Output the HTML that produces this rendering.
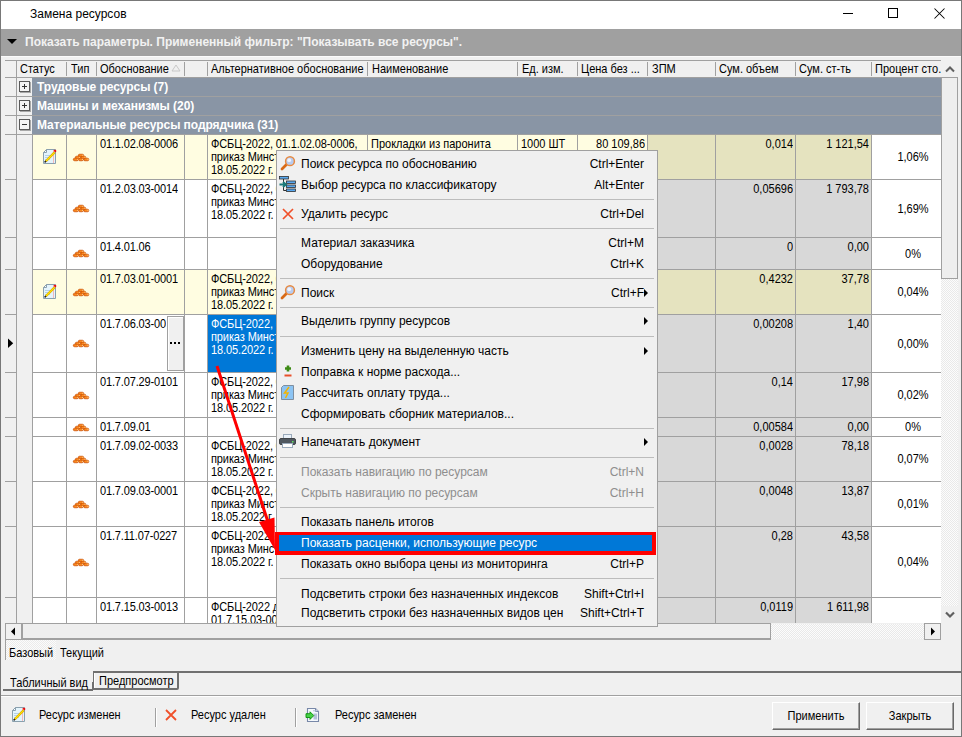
<!DOCTYPE html>
<html><head><meta charset="utf-8"><style>
html,body{margin:0;padding:0;width:962px;height:737px;overflow:hidden;background:#f0f0f0}
body{position:relative;font-family:"Liberation Sans",sans-serif;}
div,svg{position:absolute;}
div{white-space:pre;box-sizing:content-box}
svg{overflow:visible}
</style></head><body>
<div style="left:0px;top:0px;width:962px;height:737px;background:#f0f0f0"></div>
<div style="left:1px;top:1px;width:960px;height:28px;background:#fff"></div>
<div style="top:8px;font-size:12px;line-height:12px;color:#000;left:30px;">Замена ресурсов</div>
<div style="left:843px;top:13px;width:10px;height:1px;background:#000"></div>
<div style="left:888px;top:8px;width:8px;height:8px;border:1px solid #000"></div>
<svg style="left:934px;top:8px" width="11" height="11"><path d="M0.5 0.5L10.5 10.5M10.5 0.5L0.5 10.5" stroke="#000" stroke-width="1.05"/></svg>
<div style="left:1px;top:29px;width:960px;height:27px;background:#a0a0a0"></div>
<svg style="left:6px;top:38px" width="12" height="8"><path d="M1 1H11L6 6Z" fill="#000"/></svg>
<div style="top:36px;font-size:12px;line-height:12px;color:#f2f2f2;font-weight:bold;left:25px;">Показать параметры. Примененный фильтр: &quot;Показывать все ресурсы&quot;.</div>
<div style="left:1px;top:56px;width:960px;height:1px;background:#fafafa"></div>
<div style="left:0px;top:0px;width:962px;height:1px;background:#787878"></div>
<div style="left:0px;top:736px;width:962px;height:1px;background:#787878"></div>
<div style="left:0px;top:0px;width:1px;height:737px;background:#787878"></div>
<div style="left:961px;top:0px;width:1px;height:737px;background:#787878"></div>
<div style="left:5px;top:60px;width:936px;height:18px;background:#f0f0f0"></div>
<div style="left:5px;top:60px;width:936px;height:1px;background:#a0a0a0"></div>
<div style="left:5px;top:77px;width:936px;height:1px;background:#a0a0a0"></div>
<div style="left:16px;top:61px;width:1px;height:17px;background:#a0a0a0"></div>
<div style="left:66px;top:62px;width:1px;height:14px;background:#a0a0a0"></div>
<div style="left:96px;top:62px;width:1px;height:14px;background:#a0a0a0"></div>
<div style="left:184px;top:62px;width:1px;height:14px;background:#a0a0a0"></div>
<div style="left:207px;top:62px;width:1px;height:14px;background:#a0a0a0"></div>
<div style="left:367px;top:62px;width:1px;height:14px;background:#a0a0a0"></div>
<div style="left:517px;top:62px;width:1px;height:14px;background:#a0a0a0"></div>
<div style="left:577px;top:62px;width:1px;height:14px;background:#a0a0a0"></div>
<div style="left:647px;top:62px;width:1px;height:14px;background:#a0a0a0"></div>
<div style="left:715px;top:62px;width:1px;height:14px;background:#a0a0a0"></div>
<div style="left:795px;top:62px;width:1px;height:14px;background:#a0a0a0"></div>
<div style="left:871px;top:62px;width:1px;height:14px;background:#a0a0a0"></div>
<div style="top:64px;font-size:11px;line-height:11px;color:#000;transform:scaleY(1.125);transform-origin:0 9px;left:20px;">Статус</div>
<div style="top:64px;font-size:11px;line-height:11px;color:#000;transform:scaleY(1.125);transform-origin:0 9px;left:71px;">Тип</div>
<div style="top:64px;font-size:11px;line-height:11px;color:#000;transform:scaleY(1.125);transform-origin:0 9px;left:100px;">Обоснование</div>
<div style="top:64px;font-size:11px;line-height:11px;color:#000;transform:scaleY(1.125);transform-origin:0 9px;left:211px;">Альтернативное обоснование</div>
<div style="top:64px;font-size:11px;line-height:11px;color:#000;transform:scaleY(1.125);transform-origin:0 9px;left:372px;">Наименование</div>
<div style="top:64px;font-size:11px;line-height:11px;color:#000;transform:scaleY(1.125);transform-origin:0 9px;left:522px;">Ед. изм.</div>
<div style="top:64px;font-size:11px;line-height:11px;color:#000;transform:scaleY(1.125);transform-origin:0 9px;left:581px;">Цена без ...</div>
<div style="top:64px;font-size:11px;line-height:11px;color:#000;transform:scaleY(1.125);transform-origin:0 9px;left:652px;">ЗПМ</div>
<div style="top:64px;font-size:11px;line-height:11px;color:#000;transform:scaleY(1.125);transform-origin:0 9px;left:719px;">Сум. объем</div>
<div style="top:64px;font-size:11px;line-height:11px;color:#000;transform:scaleY(1.125);transform-origin:0 9px;left:799px;">Сум. ст-ть</div>
<div style="top:64px;font-size:11px;line-height:11px;color:#000;transform:scaleY(1.125);transform-origin:0 9px;left:875px;">Процент сто.</div>
<svg style="left:171px;top:64px" width="10" height="8"><path d="M1 7L5 1L9 7Z" fill="none" stroke="#c8c8c8" stroke-width="1"/></svg>
<div style="left:5px;top:78px;width:11px;height:545px;background:#f0f0f0"></div>
<div style="left:17px;top:78px;width:15px;height:545px;background:#f0f0f0"></div>
<div style="left:16px;top:78px;width:1px;height:545px;background:#a0a0a0"></div>
<div style="left:32px;top:135px;width:1px;height:488px;background:#a0a0a0"></div>
<div style="left:33px;top:78px;width:908px;height:18px;background:#8995a5"></div>
<div style="left:32px;top:78px;width:1px;height:18px;background:#8995a5"></div>
<div style="left:5px;top:96px;width:936px;height:1px;background:#a0a0a0"></div>
<div style="left:19px;top:81px;width:9px;height:9px;background:#f4f4f4;border:1px solid #5a5a5a;box-shadow:1px 1px 0 #a8a8a8"></div>
<div style="left:22px;top:86px;width:5px;height:1px;background:#333"></div>
<div style="left:24px;top:84px;width:1px;height:5px;background:#333"></div>
<div style="top:81px;font-size:12px;line-height:12px;color:#fff;font-weight:bold;left:37px;letter-spacing:-0.06px;">Трудовые ресурсы (7)</div>
<div style="left:33px;top:97px;width:908px;height:18px;background:#8995a5"></div>
<div style="left:32px;top:97px;width:1px;height:18px;background:#8995a5"></div>
<div style="left:5px;top:115px;width:936px;height:1px;background:#a0a0a0"></div>
<div style="left:19px;top:100px;width:9px;height:9px;background:#f4f4f4;border:1px solid #5a5a5a;box-shadow:1px 1px 0 #a8a8a8"></div>
<div style="left:22px;top:105px;width:5px;height:1px;background:#333"></div>
<div style="left:24px;top:103px;width:1px;height:5px;background:#333"></div>
<div style="top:100px;font-size:12px;line-height:12px;color:#fff;font-weight:bold;left:37px;letter-spacing:-0.06px;">Машины и механизмы (20)</div>
<div style="left:33px;top:116px;width:908px;height:18px;background:#8995a5"></div>
<div style="left:32px;top:116px;width:1px;height:18px;background:#8995a5"></div>
<div style="left:5px;top:134px;width:936px;height:1px;background:#a0a0a0"></div>
<div style="left:19px;top:119px;width:9px;height:9px;background:#f4f4f4;border:1px solid #5a5a5a;box-shadow:1px 1px 0 #a8a8a8"></div>
<div style="left:22px;top:124px;width:5px;height:1px;background:#333"></div>
<div style="top:119px;font-size:12px;line-height:12px;color:#fff;font-weight:bold;left:37px;letter-spacing:-0.06px;">Материальные ресурсы подрядчика (31)</div>
<div style="left:0;top:0;width:962px;height:623px;overflow:hidden">
<div style="left:33px;top:135px;width:908px;height:44px;background:#fffde1"></div>
<div style="left:648px;top:135px;width:223px;height:44px;background:#e5e3bf"></div>
<div style="left:648px;top:135px;width:223px;height:44px;background:#e5e3bf"></div>
<div style="left:872px;top:135px;width:69px;height:44px;background:#fff"></div>
<div style="left:5px;top:179px;width:11px;height:1px;background:#a0a0a0"></div>
<div style="left:33px;top:179px;width:908px;height:1px;background:#a0a0a0"></div>
<div style="left:66px;top:135px;width:1px;height:44px;background:#a0a0a0"></div>
<div style="left:96px;top:135px;width:1px;height:44px;background:#a0a0a0"></div>
<div style="left:184px;top:135px;width:1px;height:44px;background:#a0a0a0"></div>
<div style="left:207px;top:135px;width:1px;height:44px;background:#a0a0a0"></div>
<div style="left:367px;top:135px;width:1px;height:44px;background:#a0a0a0"></div>
<div style="left:517px;top:135px;width:1px;height:44px;background:#a0a0a0"></div>
<div style="left:577px;top:135px;width:1px;height:44px;background:#a0a0a0"></div>
<div style="left:647px;top:135px;width:1px;height:44px;background:#a0a0a0"></div>
<div style="left:715px;top:135px;width:1px;height:44px;background:#a0a0a0"></div>
<div style="left:795px;top:135px;width:1px;height:44px;background:#a0a0a0"></div>
<div style="left:871px;top:135px;width:1px;height:44px;background:#a0a0a0"></div>
<svg style="left:42px;top:148px" width="16" height="16" viewBox="0 0 16 16"><path d="M1.5 4.5L4.5 1.5H13.5V15.5H1.5Z" fill="#e4f4fc" stroke="#8aa0ae"/><path d="M1.5 4.5H4.5V1.5Z" fill="#fff" stroke="#8aa0ae"/><path d="M3 7.5H10M3 9.5H9M3 11.5H8" stroke="#b4d2e8"/><path d="M11.5 2V15" stroke="#f4b8b8"/><path d="M3.8 13.2L12.6 4.4" stroke="#d8a000" stroke-width="2.3"/><path d="M4 13L12.6 4.4" stroke="#ffe400" stroke-width="1.2"/><path d="M12.4 3.6L13.8 2.2" stroke="#f00000" stroke-width="2.2"/><path d="M2.6 14.4L4 13" stroke="#222" stroke-width="1.5"/></svg>
<svg style="left:72px;top:153px" width="18" height="9" viewBox="0 0 18 9"><g fill="#f47208" stroke="#c04800" stroke-width="0.6"><rect x="6.3" y="1.2" width="5.4" height="2.6" rx="1.3"/><rect x="3.3" y="3.2" width="5.2" height="2.6" rx="1.3"/><rect x="8.6" y="3.2" width="5.2" height="2.6" rx="1.3"/><rect x="1.3" y="5.2" width="5" height="2.6" rx="1.3"/><rect x="6.6" y="5.2" width="4.6" height="2.6" rx="1.3"/><rect x="11.6" y="5.2" width="5.2" height="2.6" rx="1.3"/></g><g stroke="#ff9a30" stroke-width="0.8"><path d="M7.5 2.3H10.5M4.5 4.3H7.5M9.8 4.3H12.8M2.5 6.3H5.5M7.5 6.3H10.3M12.8 6.3H15.8"/></g><g fill="#ffd9a0"><rect x="10.3" y="1.8" width="1" height="1"/><rect x="7.2" y="3.8" width="1" height="1"/><rect x="12.5" y="3.8" width="1" height="1"/><rect x="5.2" y="5.8" width="1" height="1"/><rect x="10" y="5.8" width="1" height="1"/><rect x="15.5" y="5.8" width="1" height="1"/></g></svg>
<div style="top:139px;font-size:11px;line-height:11px;color:#000;transform:scaleY(1.125);transform-origin:0 9px;left:100px;width:83px;overflow:hidden;letter-spacing:-0.15px;">01.1.02.08-0006</div>
<div style="top:139px;font-size:11px;line-height:11px;color:#000;transform:scaleY(1.125);transform-origin:0 9px;left:211px;width:155px;overflow:hidden;letter-spacing:-0.1px;">ФСБЦ-2022, 01.1.02.08-0006,</div>
<div style="top:152px;font-size:11px;line-height:11px;color:#000;transform:scaleY(1.125);transform-origin:0 9px;left:211px;width:155px;overflow:hidden;letter-spacing:-0.1px;">приказ Минстроя России от</div>
<div style="top:165px;font-size:11px;line-height:11px;color:#000;transform:scaleY(1.125);transform-origin:0 9px;left:211px;width:155px;overflow:hidden;letter-spacing:-0.1px;">18.05.2022 г.</div>
<div style="top:139px;font-size:11px;line-height:11px;color:#000;transform:scaleY(1.125);transform-origin:0 9px;left:718px;width:75px;text-align:right;">0,014</div>
<div style="top:139px;font-size:11px;line-height:11px;color:#000;transform:scaleY(1.125);transform-origin:0 9px;left:797px;width:72px;text-align:right;">1 121,54</div>
<div style="top:152px;font-size:11px;line-height:11px;color:#000;transform:scaleY(1.125);transform-origin:0 9px;left:880px;width:66px;text-align:center;">1,06%</div>
<div style="top:139px;font-size:11px;line-height:11px;color:#000;transform:scaleY(1.125);transform-origin:0 9px;left:371px;width:146px;overflow:hidden;">Прокладки из паронита</div>
<div style="top:139px;font-size:11px;line-height:11px;color:#000;transform:scaleY(1.125);transform-origin:0 9px;left:521px;width:56px;overflow:hidden;">1000 ШТ</div>
<div style="top:139px;font-size:11px;line-height:11px;color:#000;transform:scaleY(1.125);transform-origin:0 9px;left:579px;width:66px;text-align:right;">80 109,86</div>
<div style="left:33px;top:180px;width:908px;height:57px;background:#ffffff"></div>
<div style="left:648px;top:180px;width:223px;height:57px;background:#d8d8d8"></div>
<div style="left:648px;top:180px;width:223px;height:57px;background:#d8d8d8"></div>
<div style="left:872px;top:180px;width:69px;height:57px;background:#fff"></div>
<div style="left:5px;top:237px;width:11px;height:1px;background:#a0a0a0"></div>
<div style="left:33px;top:237px;width:908px;height:1px;background:#a0a0a0"></div>
<div style="left:66px;top:180px;width:1px;height:57px;background:#a0a0a0"></div>
<div style="left:96px;top:180px;width:1px;height:57px;background:#a0a0a0"></div>
<div style="left:184px;top:180px;width:1px;height:57px;background:#a0a0a0"></div>
<div style="left:207px;top:180px;width:1px;height:57px;background:#a0a0a0"></div>
<div style="left:367px;top:180px;width:1px;height:57px;background:#a0a0a0"></div>
<div style="left:517px;top:180px;width:1px;height:57px;background:#a0a0a0"></div>
<div style="left:577px;top:180px;width:1px;height:57px;background:#a0a0a0"></div>
<div style="left:647px;top:180px;width:1px;height:57px;background:#a0a0a0"></div>
<div style="left:715px;top:180px;width:1px;height:57px;background:#a0a0a0"></div>
<div style="left:795px;top:180px;width:1px;height:57px;background:#a0a0a0"></div>
<div style="left:871px;top:180px;width:1px;height:57px;background:#a0a0a0"></div>
<svg style="left:72px;top:204px" width="18" height="9" viewBox="0 0 18 9"><g fill="#f47208" stroke="#c04800" stroke-width="0.6"><rect x="6.3" y="1.2" width="5.4" height="2.6" rx="1.3"/><rect x="3.3" y="3.2" width="5.2" height="2.6" rx="1.3"/><rect x="8.6" y="3.2" width="5.2" height="2.6" rx="1.3"/><rect x="1.3" y="5.2" width="5" height="2.6" rx="1.3"/><rect x="6.6" y="5.2" width="4.6" height="2.6" rx="1.3"/><rect x="11.6" y="5.2" width="5.2" height="2.6" rx="1.3"/></g><g stroke="#ff9a30" stroke-width="0.8"><path d="M7.5 2.3H10.5M4.5 4.3H7.5M9.8 4.3H12.8M2.5 6.3H5.5M7.5 6.3H10.3M12.8 6.3H15.8"/></g><g fill="#ffd9a0"><rect x="10.3" y="1.8" width="1" height="1"/><rect x="7.2" y="3.8" width="1" height="1"/><rect x="12.5" y="3.8" width="1" height="1"/><rect x="5.2" y="5.8" width="1" height="1"/><rect x="10" y="5.8" width="1" height="1"/><rect x="15.5" y="5.8" width="1" height="1"/></g></svg>
<div style="top:184px;font-size:11px;line-height:11px;color:#000;transform:scaleY(1.125);transform-origin:0 9px;left:100px;width:83px;overflow:hidden;letter-spacing:-0.15px;">01.2.03.03-0014</div>
<div style="top:184px;font-size:11px;line-height:11px;color:#000;transform:scaleY(1.125);transform-origin:0 9px;left:211px;width:155px;overflow:hidden;letter-spacing:-0.1px;">ФСБЦ-2022, 01.2.03.03-0014,</div>
<div style="top:197px;font-size:11px;line-height:11px;color:#000;transform:scaleY(1.125);transform-origin:0 9px;left:211px;width:155px;overflow:hidden;letter-spacing:-0.1px;">приказ Минстроя России от</div>
<div style="top:210px;font-size:11px;line-height:11px;color:#000;transform:scaleY(1.125);transform-origin:0 9px;left:211px;width:155px;overflow:hidden;letter-spacing:-0.1px;">18.05.2022 г.</div>
<div style="top:184px;font-size:11px;line-height:11px;color:#000;transform:scaleY(1.125);transform-origin:0 9px;left:718px;width:75px;text-align:right;">0,05696</div>
<div style="top:184px;font-size:11px;line-height:11px;color:#000;transform:scaleY(1.125);transform-origin:0 9px;left:797px;width:72px;text-align:right;">1 793,78</div>
<div style="top:204px;font-size:11px;line-height:11px;color:#000;transform:scaleY(1.125);transform-origin:0 9px;left:880px;width:66px;text-align:center;">1,69%</div>
<div style="left:33px;top:238px;width:908px;height:31px;background:#ffffff"></div>
<div style="left:648px;top:238px;width:223px;height:31px;background:#d8d8d8"></div>
<div style="left:648px;top:238px;width:223px;height:31px;background:#d8d8d8"></div>
<div style="left:872px;top:238px;width:69px;height:31px;background:#fff"></div>
<div style="left:5px;top:269px;width:11px;height:1px;background:#a0a0a0"></div>
<div style="left:33px;top:269px;width:908px;height:1px;background:#a0a0a0"></div>
<div style="left:66px;top:238px;width:1px;height:31px;background:#a0a0a0"></div>
<div style="left:96px;top:238px;width:1px;height:31px;background:#a0a0a0"></div>
<div style="left:184px;top:238px;width:1px;height:31px;background:#a0a0a0"></div>
<div style="left:207px;top:238px;width:1px;height:31px;background:#a0a0a0"></div>
<div style="left:367px;top:238px;width:1px;height:31px;background:#a0a0a0"></div>
<div style="left:517px;top:238px;width:1px;height:31px;background:#a0a0a0"></div>
<div style="left:577px;top:238px;width:1px;height:31px;background:#a0a0a0"></div>
<div style="left:647px;top:238px;width:1px;height:31px;background:#a0a0a0"></div>
<div style="left:715px;top:238px;width:1px;height:31px;background:#a0a0a0"></div>
<div style="left:795px;top:238px;width:1px;height:31px;background:#a0a0a0"></div>
<div style="left:871px;top:238px;width:1px;height:31px;background:#a0a0a0"></div>
<svg style="left:72px;top:249px" width="18" height="9" viewBox="0 0 18 9"><g fill="#f47208" stroke="#c04800" stroke-width="0.6"><rect x="6.3" y="1.2" width="5.4" height="2.6" rx="1.3"/><rect x="3.3" y="3.2" width="5.2" height="2.6" rx="1.3"/><rect x="8.6" y="3.2" width="5.2" height="2.6" rx="1.3"/><rect x="1.3" y="5.2" width="5" height="2.6" rx="1.3"/><rect x="6.6" y="5.2" width="4.6" height="2.6" rx="1.3"/><rect x="11.6" y="5.2" width="5.2" height="2.6" rx="1.3"/></g><g stroke="#ff9a30" stroke-width="0.8"><path d="M7.5 2.3H10.5M4.5 4.3H7.5M9.8 4.3H12.8M2.5 6.3H5.5M7.5 6.3H10.3M12.8 6.3H15.8"/></g><g fill="#ffd9a0"><rect x="10.3" y="1.8" width="1" height="1"/><rect x="7.2" y="3.8" width="1" height="1"/><rect x="12.5" y="3.8" width="1" height="1"/><rect x="5.2" y="5.8" width="1" height="1"/><rect x="10" y="5.8" width="1" height="1"/><rect x="15.5" y="5.8" width="1" height="1"/></g></svg>
<div style="top:242px;font-size:11px;line-height:11px;color:#000;transform:scaleY(1.125);transform-origin:0 9px;left:100px;width:83px;overflow:hidden;letter-spacing:-0.15px;">01.4.01.06</div>
<div style="top:242px;font-size:11px;line-height:11px;color:#000;transform:scaleY(1.125);transform-origin:0 9px;left:718px;width:75px;text-align:right;">0</div>
<div style="top:242px;font-size:11px;line-height:11px;color:#000;transform:scaleY(1.125);transform-origin:0 9px;left:797px;width:72px;text-align:right;">0,00</div>
<div style="top:249px;font-size:11px;line-height:11px;color:#000;transform:scaleY(1.125);transform-origin:0 9px;left:880px;width:66px;text-align:center;">0%</div>
<div style="left:33px;top:270px;width:908px;height:44px;background:#fffde1"></div>
<div style="left:648px;top:270px;width:223px;height:44px;background:#e5e3bf"></div>
<div style="left:648px;top:270px;width:223px;height:44px;background:#e5e3bf"></div>
<div style="left:872px;top:270px;width:69px;height:44px;background:#fff"></div>
<div style="left:5px;top:314px;width:11px;height:1px;background:#a0a0a0"></div>
<div style="left:33px;top:314px;width:908px;height:1px;background:#a0a0a0"></div>
<div style="left:66px;top:270px;width:1px;height:44px;background:#a0a0a0"></div>
<div style="left:96px;top:270px;width:1px;height:44px;background:#a0a0a0"></div>
<div style="left:184px;top:270px;width:1px;height:44px;background:#a0a0a0"></div>
<div style="left:207px;top:270px;width:1px;height:44px;background:#a0a0a0"></div>
<div style="left:367px;top:270px;width:1px;height:44px;background:#a0a0a0"></div>
<div style="left:517px;top:270px;width:1px;height:44px;background:#a0a0a0"></div>
<div style="left:577px;top:270px;width:1px;height:44px;background:#a0a0a0"></div>
<div style="left:647px;top:270px;width:1px;height:44px;background:#a0a0a0"></div>
<div style="left:715px;top:270px;width:1px;height:44px;background:#a0a0a0"></div>
<div style="left:795px;top:270px;width:1px;height:44px;background:#a0a0a0"></div>
<div style="left:871px;top:270px;width:1px;height:44px;background:#a0a0a0"></div>
<svg style="left:42px;top:283px" width="16" height="16" viewBox="0 0 16 16"><path d="M1.5 4.5L4.5 1.5H13.5V15.5H1.5Z" fill="#e4f4fc" stroke="#8aa0ae"/><path d="M1.5 4.5H4.5V1.5Z" fill="#fff" stroke="#8aa0ae"/><path d="M3 7.5H10M3 9.5H9M3 11.5H8" stroke="#b4d2e8"/><path d="M11.5 2V15" stroke="#f4b8b8"/><path d="M3.8 13.2L12.6 4.4" stroke="#d8a000" stroke-width="2.3"/><path d="M4 13L12.6 4.4" stroke="#ffe400" stroke-width="1.2"/><path d="M12.4 3.6L13.8 2.2" stroke="#f00000" stroke-width="2.2"/><path d="M2.6 14.4L4 13" stroke="#222" stroke-width="1.5"/></svg>
<svg style="left:72px;top:288px" width="18" height="9" viewBox="0 0 18 9"><g fill="#f47208" stroke="#c04800" stroke-width="0.6"><rect x="6.3" y="1.2" width="5.4" height="2.6" rx="1.3"/><rect x="3.3" y="3.2" width="5.2" height="2.6" rx="1.3"/><rect x="8.6" y="3.2" width="5.2" height="2.6" rx="1.3"/><rect x="1.3" y="5.2" width="5" height="2.6" rx="1.3"/><rect x="6.6" y="5.2" width="4.6" height="2.6" rx="1.3"/><rect x="11.6" y="5.2" width="5.2" height="2.6" rx="1.3"/></g><g stroke="#ff9a30" stroke-width="0.8"><path d="M7.5 2.3H10.5M4.5 4.3H7.5M9.8 4.3H12.8M2.5 6.3H5.5M7.5 6.3H10.3M12.8 6.3H15.8"/></g><g fill="#ffd9a0"><rect x="10.3" y="1.8" width="1" height="1"/><rect x="7.2" y="3.8" width="1" height="1"/><rect x="12.5" y="3.8" width="1" height="1"/><rect x="5.2" y="5.8" width="1" height="1"/><rect x="10" y="5.8" width="1" height="1"/><rect x="15.5" y="5.8" width="1" height="1"/></g></svg>
<div style="top:274px;font-size:11px;line-height:11px;color:#000;transform:scaleY(1.125);transform-origin:0 9px;left:100px;width:83px;overflow:hidden;letter-spacing:-0.15px;">01.7.03.01-0001</div>
<div style="top:274px;font-size:11px;line-height:11px;color:#000;transform:scaleY(1.125);transform-origin:0 9px;left:211px;width:155px;overflow:hidden;letter-spacing:-0.1px;">ФСБЦ-2022, 01.7.03.01-0001,</div>
<div style="top:287px;font-size:11px;line-height:11px;color:#000;transform:scaleY(1.125);transform-origin:0 9px;left:211px;width:155px;overflow:hidden;letter-spacing:-0.1px;">приказ Минстроя России от</div>
<div style="top:300px;font-size:11px;line-height:11px;color:#000;transform:scaleY(1.125);transform-origin:0 9px;left:211px;width:155px;overflow:hidden;letter-spacing:-0.1px;">18.05.2022 г.</div>
<div style="top:274px;font-size:11px;line-height:11px;color:#000;transform:scaleY(1.125);transform-origin:0 9px;left:718px;width:75px;text-align:right;">0,4232</div>
<div style="top:274px;font-size:11px;line-height:11px;color:#000;transform:scaleY(1.125);transform-origin:0 9px;left:797px;width:72px;text-align:right;">37,78</div>
<div style="top:287px;font-size:11px;line-height:11px;color:#000;transform:scaleY(1.125);transform-origin:0 9px;left:880px;width:66px;text-align:center;">0,04%</div>
<div style="left:33px;top:315px;width:908px;height:57px;background:#ffffff"></div>
<div style="left:648px;top:315px;width:223px;height:57px;background:#d8d8d8"></div>
<div style="left:648px;top:315px;width:223px;height:57px;background:#d8d8d8"></div>
<div style="left:872px;top:315px;width:69px;height:57px;background:#fff"></div>
<div style="left:5px;top:372px;width:11px;height:1px;background:#a0a0a0"></div>
<div style="left:33px;top:372px;width:908px;height:1px;background:#a0a0a0"></div>
<div style="left:66px;top:315px;width:1px;height:57px;background:#a0a0a0"></div>
<div style="left:96px;top:315px;width:1px;height:57px;background:#a0a0a0"></div>
<div style="left:184px;top:315px;width:1px;height:57px;background:#a0a0a0"></div>
<div style="left:207px;top:315px;width:1px;height:57px;background:#a0a0a0"></div>
<div style="left:367px;top:315px;width:1px;height:57px;background:#a0a0a0"></div>
<div style="left:517px;top:315px;width:1px;height:57px;background:#a0a0a0"></div>
<div style="left:577px;top:315px;width:1px;height:57px;background:#a0a0a0"></div>
<div style="left:647px;top:315px;width:1px;height:57px;background:#a0a0a0"></div>
<div style="left:715px;top:315px;width:1px;height:57px;background:#a0a0a0"></div>
<div style="left:795px;top:315px;width:1px;height:57px;background:#a0a0a0"></div>
<div style="left:871px;top:315px;width:1px;height:57px;background:#a0a0a0"></div>
<div style="left:208px;top:315px;width:68px;height:57px;background:#0078d7"></div>
<svg style="left:72px;top:339px" width="18" height="9" viewBox="0 0 18 9"><g fill="#f47208" stroke="#c04800" stroke-width="0.6"><rect x="6.3" y="1.2" width="5.4" height="2.6" rx="1.3"/><rect x="3.3" y="3.2" width="5.2" height="2.6" rx="1.3"/><rect x="8.6" y="3.2" width="5.2" height="2.6" rx="1.3"/><rect x="1.3" y="5.2" width="5" height="2.6" rx="1.3"/><rect x="6.6" y="5.2" width="4.6" height="2.6" rx="1.3"/><rect x="11.6" y="5.2" width="5.2" height="2.6" rx="1.3"/></g><g stroke="#ff9a30" stroke-width="0.8"><path d="M7.5 2.3H10.5M4.5 4.3H7.5M9.8 4.3H12.8M2.5 6.3H5.5M7.5 6.3H10.3M12.8 6.3H15.8"/></g><g fill="#ffd9a0"><rect x="10.3" y="1.8" width="1" height="1"/><rect x="7.2" y="3.8" width="1" height="1"/><rect x="12.5" y="3.8" width="1" height="1"/><rect x="5.2" y="5.8" width="1" height="1"/><rect x="10" y="5.8" width="1" height="1"/><rect x="15.5" y="5.8" width="1" height="1"/></g></svg>
<div style="top:319px;font-size:11px;line-height:11px;color:#000;transform:scaleY(1.125);transform-origin:0 9px;left:100px;width:66px;overflow:hidden;letter-spacing:-0.15px;">01.7.06.03-0023</div>
<div style="top:319px;font-size:11px;line-height:11px;color:#fff;transform:scaleY(1.125);transform-origin:0 9px;left:211px;width:155px;overflow:hidden;letter-spacing:-0.1px;">ФСБЦ-2022, 01.7.06.03-0023,</div>
<div style="top:332px;font-size:11px;line-height:11px;color:#fff;transform:scaleY(1.125);transform-origin:0 9px;left:211px;width:155px;overflow:hidden;letter-spacing:-0.1px;">приказ Минстроя России от</div>
<div style="top:345px;font-size:11px;line-height:11px;color:#fff;transform:scaleY(1.125);transform-origin:0 9px;left:211px;width:155px;overflow:hidden;letter-spacing:-0.1px;">18.05.2022 г.</div>
<div style="top:319px;font-size:11px;line-height:11px;color:#000;transform:scaleY(1.125);transform-origin:0 9px;left:718px;width:75px;text-align:right;">0,00208</div>
<div style="top:319px;font-size:11px;line-height:11px;color:#000;transform:scaleY(1.125);transform-origin:0 9px;left:797px;width:72px;text-align:right;">1,40</div>
<div style="top:339px;font-size:11px;line-height:11px;color:#000;transform:scaleY(1.125);transform-origin:0 9px;left:880px;width:66px;text-align:center;">0,00%</div>
<div style="left:167px;top:316px;width:17px;height:55px;background:#f0f0f0;border:1px solid #a0a0a0;box-sizing:border-box;box-shadow:inset 1px 1px 0 #fff"></div>
<div style="left:170px;top:342px;width:2px;height:2px;background:#000"></div>
<div style="left:174px;top:342px;width:2px;height:2px;background:#000"></div>
<div style="left:178px;top:342px;width:2px;height:2px;background:#000"></div>
<div style="left:33px;top:373px;width:908px;height:44px;background:#ffffff"></div>
<div style="left:648px;top:373px;width:223px;height:44px;background:#d8d8d8"></div>
<div style="left:648px;top:373px;width:223px;height:44px;background:#d8d8d8"></div>
<div style="left:872px;top:373px;width:69px;height:44px;background:#fff"></div>
<div style="left:5px;top:417px;width:11px;height:1px;background:#a0a0a0"></div>
<div style="left:33px;top:417px;width:908px;height:1px;background:#a0a0a0"></div>
<div style="left:66px;top:373px;width:1px;height:44px;background:#a0a0a0"></div>
<div style="left:96px;top:373px;width:1px;height:44px;background:#a0a0a0"></div>
<div style="left:184px;top:373px;width:1px;height:44px;background:#a0a0a0"></div>
<div style="left:207px;top:373px;width:1px;height:44px;background:#a0a0a0"></div>
<div style="left:367px;top:373px;width:1px;height:44px;background:#a0a0a0"></div>
<div style="left:517px;top:373px;width:1px;height:44px;background:#a0a0a0"></div>
<div style="left:577px;top:373px;width:1px;height:44px;background:#a0a0a0"></div>
<div style="left:647px;top:373px;width:1px;height:44px;background:#a0a0a0"></div>
<div style="left:715px;top:373px;width:1px;height:44px;background:#a0a0a0"></div>
<div style="left:795px;top:373px;width:1px;height:44px;background:#a0a0a0"></div>
<div style="left:871px;top:373px;width:1px;height:44px;background:#a0a0a0"></div>
<svg style="left:72px;top:391px" width="18" height="9" viewBox="0 0 18 9"><g fill="#f47208" stroke="#c04800" stroke-width="0.6"><rect x="6.3" y="1.2" width="5.4" height="2.6" rx="1.3"/><rect x="3.3" y="3.2" width="5.2" height="2.6" rx="1.3"/><rect x="8.6" y="3.2" width="5.2" height="2.6" rx="1.3"/><rect x="1.3" y="5.2" width="5" height="2.6" rx="1.3"/><rect x="6.6" y="5.2" width="4.6" height="2.6" rx="1.3"/><rect x="11.6" y="5.2" width="5.2" height="2.6" rx="1.3"/></g><g stroke="#ff9a30" stroke-width="0.8"><path d="M7.5 2.3H10.5M4.5 4.3H7.5M9.8 4.3H12.8M2.5 6.3H5.5M7.5 6.3H10.3M12.8 6.3H15.8"/></g><g fill="#ffd9a0"><rect x="10.3" y="1.8" width="1" height="1"/><rect x="7.2" y="3.8" width="1" height="1"/><rect x="12.5" y="3.8" width="1" height="1"/><rect x="5.2" y="5.8" width="1" height="1"/><rect x="10" y="5.8" width="1" height="1"/><rect x="15.5" y="5.8" width="1" height="1"/></g></svg>
<div style="top:377px;font-size:11px;line-height:11px;color:#000;transform:scaleY(1.125);transform-origin:0 9px;left:100px;width:83px;overflow:hidden;letter-spacing:-0.15px;">01.7.07.29-0101</div>
<div style="top:377px;font-size:11px;line-height:11px;color:#000;transform:scaleY(1.125);transform-origin:0 9px;left:211px;width:155px;overflow:hidden;letter-spacing:-0.1px;">ФСБЦ-2022, 01.7.07.29-0101,</div>
<div style="top:390px;font-size:11px;line-height:11px;color:#000;transform:scaleY(1.125);transform-origin:0 9px;left:211px;width:155px;overflow:hidden;letter-spacing:-0.1px;">приказ Минстроя России от</div>
<div style="top:403px;font-size:11px;line-height:11px;color:#000;transform:scaleY(1.125);transform-origin:0 9px;left:211px;width:155px;overflow:hidden;letter-spacing:-0.1px;">18.05.2022 г.</div>
<div style="top:377px;font-size:11px;line-height:11px;color:#000;transform:scaleY(1.125);transform-origin:0 9px;left:718px;width:75px;text-align:right;">0,14</div>
<div style="top:377px;font-size:11px;line-height:11px;color:#000;transform:scaleY(1.125);transform-origin:0 9px;left:797px;width:72px;text-align:right;">17,98</div>
<div style="top:390px;font-size:11px;line-height:11px;color:#000;transform:scaleY(1.125);transform-origin:0 9px;left:880px;width:66px;text-align:center;">0,02%</div>
<div style="left:33px;top:418px;width:908px;height:18px;background:#ffffff"></div>
<div style="left:648px;top:418px;width:223px;height:18px;background:#d8d8d8"></div>
<div style="left:648px;top:418px;width:223px;height:18px;background:#d8d8d8"></div>
<div style="left:872px;top:418px;width:69px;height:18px;background:#fff"></div>
<div style="left:5px;top:436px;width:11px;height:1px;background:#a0a0a0"></div>
<div style="left:33px;top:436px;width:908px;height:1px;background:#a0a0a0"></div>
<div style="left:66px;top:418px;width:1px;height:18px;background:#a0a0a0"></div>
<div style="left:96px;top:418px;width:1px;height:18px;background:#a0a0a0"></div>
<div style="left:184px;top:418px;width:1px;height:18px;background:#a0a0a0"></div>
<div style="left:207px;top:418px;width:1px;height:18px;background:#a0a0a0"></div>
<div style="left:367px;top:418px;width:1px;height:18px;background:#a0a0a0"></div>
<div style="left:517px;top:418px;width:1px;height:18px;background:#a0a0a0"></div>
<div style="left:577px;top:418px;width:1px;height:18px;background:#a0a0a0"></div>
<div style="left:647px;top:418px;width:1px;height:18px;background:#a0a0a0"></div>
<div style="left:715px;top:418px;width:1px;height:18px;background:#a0a0a0"></div>
<div style="left:795px;top:418px;width:1px;height:18px;background:#a0a0a0"></div>
<div style="left:871px;top:418px;width:1px;height:18px;background:#a0a0a0"></div>
<svg style="left:72px;top:423px" width="18" height="9" viewBox="0 0 18 9"><g fill="#f47208" stroke="#c04800" stroke-width="0.6"><rect x="6.3" y="1.2" width="5.4" height="2.6" rx="1.3"/><rect x="3.3" y="3.2" width="5.2" height="2.6" rx="1.3"/><rect x="8.6" y="3.2" width="5.2" height="2.6" rx="1.3"/><rect x="1.3" y="5.2" width="5" height="2.6" rx="1.3"/><rect x="6.6" y="5.2" width="4.6" height="2.6" rx="1.3"/><rect x="11.6" y="5.2" width="5.2" height="2.6" rx="1.3"/></g><g stroke="#ff9a30" stroke-width="0.8"><path d="M7.5 2.3H10.5M4.5 4.3H7.5M9.8 4.3H12.8M2.5 6.3H5.5M7.5 6.3H10.3M12.8 6.3H15.8"/></g><g fill="#ffd9a0"><rect x="10.3" y="1.8" width="1" height="1"/><rect x="7.2" y="3.8" width="1" height="1"/><rect x="12.5" y="3.8" width="1" height="1"/><rect x="5.2" y="5.8" width="1" height="1"/><rect x="10" y="5.8" width="1" height="1"/><rect x="15.5" y="5.8" width="1" height="1"/></g></svg>
<div style="top:422px;font-size:11px;line-height:11px;color:#000;transform:scaleY(1.125);transform-origin:0 9px;left:100px;width:83px;overflow:hidden;letter-spacing:-0.15px;">01.7.09.01</div>
<div style="top:422px;font-size:11px;line-height:11px;color:#000;transform:scaleY(1.125);transform-origin:0 9px;left:718px;width:75px;text-align:right;">0,00584</div>
<div style="top:422px;font-size:11px;line-height:11px;color:#000;transform:scaleY(1.125);transform-origin:0 9px;left:797px;width:72px;text-align:right;">0,00</div>
<div style="top:422px;font-size:11px;line-height:11px;color:#000;transform:scaleY(1.125);transform-origin:0 9px;left:880px;width:66px;text-align:center;">0%</div>
<div style="left:33px;top:437px;width:908px;height:44px;background:#ffffff"></div>
<div style="left:648px;top:437px;width:223px;height:44px;background:#d8d8d8"></div>
<div style="left:648px;top:437px;width:223px;height:44px;background:#d8d8d8"></div>
<div style="left:872px;top:437px;width:69px;height:44px;background:#fff"></div>
<div style="left:5px;top:481px;width:11px;height:1px;background:#a0a0a0"></div>
<div style="left:33px;top:481px;width:908px;height:1px;background:#a0a0a0"></div>
<div style="left:66px;top:437px;width:1px;height:44px;background:#a0a0a0"></div>
<div style="left:96px;top:437px;width:1px;height:44px;background:#a0a0a0"></div>
<div style="left:184px;top:437px;width:1px;height:44px;background:#a0a0a0"></div>
<div style="left:207px;top:437px;width:1px;height:44px;background:#a0a0a0"></div>
<div style="left:367px;top:437px;width:1px;height:44px;background:#a0a0a0"></div>
<div style="left:517px;top:437px;width:1px;height:44px;background:#a0a0a0"></div>
<div style="left:577px;top:437px;width:1px;height:44px;background:#a0a0a0"></div>
<div style="left:647px;top:437px;width:1px;height:44px;background:#a0a0a0"></div>
<div style="left:715px;top:437px;width:1px;height:44px;background:#a0a0a0"></div>
<div style="left:795px;top:437px;width:1px;height:44px;background:#a0a0a0"></div>
<div style="left:871px;top:437px;width:1px;height:44px;background:#a0a0a0"></div>
<svg style="left:72px;top:455px" width="18" height="9" viewBox="0 0 18 9"><g fill="#f47208" stroke="#c04800" stroke-width="0.6"><rect x="6.3" y="1.2" width="5.4" height="2.6" rx="1.3"/><rect x="3.3" y="3.2" width="5.2" height="2.6" rx="1.3"/><rect x="8.6" y="3.2" width="5.2" height="2.6" rx="1.3"/><rect x="1.3" y="5.2" width="5" height="2.6" rx="1.3"/><rect x="6.6" y="5.2" width="4.6" height="2.6" rx="1.3"/><rect x="11.6" y="5.2" width="5.2" height="2.6" rx="1.3"/></g><g stroke="#ff9a30" stroke-width="0.8"><path d="M7.5 2.3H10.5M4.5 4.3H7.5M9.8 4.3H12.8M2.5 6.3H5.5M7.5 6.3H10.3M12.8 6.3H15.8"/></g><g fill="#ffd9a0"><rect x="10.3" y="1.8" width="1" height="1"/><rect x="7.2" y="3.8" width="1" height="1"/><rect x="12.5" y="3.8" width="1" height="1"/><rect x="5.2" y="5.8" width="1" height="1"/><rect x="10" y="5.8" width="1" height="1"/><rect x="15.5" y="5.8" width="1" height="1"/></g></svg>
<div style="top:441px;font-size:11px;line-height:11px;color:#000;transform:scaleY(1.125);transform-origin:0 9px;left:100px;width:83px;overflow:hidden;letter-spacing:-0.15px;">01.7.09.02-0033</div>
<div style="top:441px;font-size:11px;line-height:11px;color:#000;transform:scaleY(1.125);transform-origin:0 9px;left:211px;width:155px;overflow:hidden;letter-spacing:-0.1px;">ФСБЦ-2022, 01.7.09.02-0033,</div>
<div style="top:454px;font-size:11px;line-height:11px;color:#000;transform:scaleY(1.125);transform-origin:0 9px;left:211px;width:155px;overflow:hidden;letter-spacing:-0.1px;">приказ Минстроя России от</div>
<div style="top:467px;font-size:11px;line-height:11px;color:#000;transform:scaleY(1.125);transform-origin:0 9px;left:211px;width:155px;overflow:hidden;letter-spacing:-0.1px;">18.05.2022 г.</div>
<div style="top:441px;font-size:11px;line-height:11px;color:#000;transform:scaleY(1.125);transform-origin:0 9px;left:718px;width:75px;text-align:right;">0,0028</div>
<div style="top:441px;font-size:11px;line-height:11px;color:#000;transform:scaleY(1.125);transform-origin:0 9px;left:797px;width:72px;text-align:right;">78,18</div>
<div style="top:454px;font-size:11px;line-height:11px;color:#000;transform:scaleY(1.125);transform-origin:0 9px;left:880px;width:66px;text-align:center;">0,07%</div>
<div style="left:33px;top:482px;width:908px;height:44px;background:#ffffff"></div>
<div style="left:648px;top:482px;width:223px;height:44px;background:#d8d8d8"></div>
<div style="left:648px;top:482px;width:223px;height:44px;background:#d8d8d8"></div>
<div style="left:872px;top:482px;width:69px;height:44px;background:#fff"></div>
<div style="left:5px;top:526px;width:11px;height:1px;background:#a0a0a0"></div>
<div style="left:33px;top:526px;width:908px;height:1px;background:#a0a0a0"></div>
<div style="left:66px;top:482px;width:1px;height:44px;background:#a0a0a0"></div>
<div style="left:96px;top:482px;width:1px;height:44px;background:#a0a0a0"></div>
<div style="left:184px;top:482px;width:1px;height:44px;background:#a0a0a0"></div>
<div style="left:207px;top:482px;width:1px;height:44px;background:#a0a0a0"></div>
<div style="left:367px;top:482px;width:1px;height:44px;background:#a0a0a0"></div>
<div style="left:517px;top:482px;width:1px;height:44px;background:#a0a0a0"></div>
<div style="left:577px;top:482px;width:1px;height:44px;background:#a0a0a0"></div>
<div style="left:647px;top:482px;width:1px;height:44px;background:#a0a0a0"></div>
<div style="left:715px;top:482px;width:1px;height:44px;background:#a0a0a0"></div>
<div style="left:795px;top:482px;width:1px;height:44px;background:#a0a0a0"></div>
<div style="left:871px;top:482px;width:1px;height:44px;background:#a0a0a0"></div>
<svg style="left:72px;top:500px" width="18" height="9" viewBox="0 0 18 9"><g fill="#f47208" stroke="#c04800" stroke-width="0.6"><rect x="6.3" y="1.2" width="5.4" height="2.6" rx="1.3"/><rect x="3.3" y="3.2" width="5.2" height="2.6" rx="1.3"/><rect x="8.6" y="3.2" width="5.2" height="2.6" rx="1.3"/><rect x="1.3" y="5.2" width="5" height="2.6" rx="1.3"/><rect x="6.6" y="5.2" width="4.6" height="2.6" rx="1.3"/><rect x="11.6" y="5.2" width="5.2" height="2.6" rx="1.3"/></g><g stroke="#ff9a30" stroke-width="0.8"><path d="M7.5 2.3H10.5M4.5 4.3H7.5M9.8 4.3H12.8M2.5 6.3H5.5M7.5 6.3H10.3M12.8 6.3H15.8"/></g><g fill="#ffd9a0"><rect x="10.3" y="1.8" width="1" height="1"/><rect x="7.2" y="3.8" width="1" height="1"/><rect x="12.5" y="3.8" width="1" height="1"/><rect x="5.2" y="5.8" width="1" height="1"/><rect x="10" y="5.8" width="1" height="1"/><rect x="15.5" y="5.8" width="1" height="1"/></g></svg>
<div style="top:486px;font-size:11px;line-height:11px;color:#000;transform:scaleY(1.125);transform-origin:0 9px;left:100px;width:83px;overflow:hidden;letter-spacing:-0.15px;">01.7.09.03-0001</div>
<div style="top:486px;font-size:11px;line-height:11px;color:#000;transform:scaleY(1.125);transform-origin:0 9px;left:211px;width:155px;overflow:hidden;letter-spacing:-0.1px;">ФСБЦ-2022, 01.7.09.03-0001,</div>
<div style="top:499px;font-size:11px;line-height:11px;color:#000;transform:scaleY(1.125);transform-origin:0 9px;left:211px;width:155px;overflow:hidden;letter-spacing:-0.1px;">приказ Минстроя России от</div>
<div style="top:512px;font-size:11px;line-height:11px;color:#000;transform:scaleY(1.125);transform-origin:0 9px;left:211px;width:155px;overflow:hidden;letter-spacing:-0.1px;">18.05.2022 г.</div>
<div style="top:486px;font-size:11px;line-height:11px;color:#000;transform:scaleY(1.125);transform-origin:0 9px;left:718px;width:75px;text-align:right;">0,0048</div>
<div style="top:486px;font-size:11px;line-height:11px;color:#000;transform:scaleY(1.125);transform-origin:0 9px;left:797px;width:72px;text-align:right;">13,87</div>
<div style="top:499px;font-size:11px;line-height:11px;color:#000;transform:scaleY(1.125);transform-origin:0 9px;left:880px;width:66px;text-align:center;">0,01%</div>
<div style="left:33px;top:527px;width:908px;height:70px;background:#ffffff"></div>
<div style="left:648px;top:527px;width:223px;height:70px;background:#d8d8d8"></div>
<div style="left:648px;top:527px;width:223px;height:70px;background:#d8d8d8"></div>
<div style="left:872px;top:527px;width:69px;height:70px;background:#fff"></div>
<div style="left:5px;top:597px;width:11px;height:1px;background:#a0a0a0"></div>
<div style="left:33px;top:597px;width:908px;height:1px;background:#a0a0a0"></div>
<div style="left:66px;top:527px;width:1px;height:70px;background:#a0a0a0"></div>
<div style="left:96px;top:527px;width:1px;height:70px;background:#a0a0a0"></div>
<div style="left:184px;top:527px;width:1px;height:70px;background:#a0a0a0"></div>
<div style="left:207px;top:527px;width:1px;height:70px;background:#a0a0a0"></div>
<div style="left:367px;top:527px;width:1px;height:70px;background:#a0a0a0"></div>
<div style="left:517px;top:527px;width:1px;height:70px;background:#a0a0a0"></div>
<div style="left:577px;top:527px;width:1px;height:70px;background:#a0a0a0"></div>
<div style="left:647px;top:527px;width:1px;height:70px;background:#a0a0a0"></div>
<div style="left:715px;top:527px;width:1px;height:70px;background:#a0a0a0"></div>
<div style="left:795px;top:527px;width:1px;height:70px;background:#a0a0a0"></div>
<div style="left:871px;top:527px;width:1px;height:70px;background:#a0a0a0"></div>
<svg style="left:72px;top:558px" width="18" height="9" viewBox="0 0 18 9"><g fill="#f47208" stroke="#c04800" stroke-width="0.6"><rect x="6.3" y="1.2" width="5.4" height="2.6" rx="1.3"/><rect x="3.3" y="3.2" width="5.2" height="2.6" rx="1.3"/><rect x="8.6" y="3.2" width="5.2" height="2.6" rx="1.3"/><rect x="1.3" y="5.2" width="5" height="2.6" rx="1.3"/><rect x="6.6" y="5.2" width="4.6" height="2.6" rx="1.3"/><rect x="11.6" y="5.2" width="5.2" height="2.6" rx="1.3"/></g><g stroke="#ff9a30" stroke-width="0.8"><path d="M7.5 2.3H10.5M4.5 4.3H7.5M9.8 4.3H12.8M2.5 6.3H5.5M7.5 6.3H10.3M12.8 6.3H15.8"/></g><g fill="#ffd9a0"><rect x="10.3" y="1.8" width="1" height="1"/><rect x="7.2" y="3.8" width="1" height="1"/><rect x="12.5" y="3.8" width="1" height="1"/><rect x="5.2" y="5.8" width="1" height="1"/><rect x="10" y="5.8" width="1" height="1"/><rect x="15.5" y="5.8" width="1" height="1"/></g></svg>
<div style="top:531px;font-size:11px;line-height:11px;color:#000;transform:scaleY(1.125);transform-origin:0 9px;left:100px;width:83px;overflow:hidden;letter-spacing:-0.15px;">01.7.11.07-0227</div>
<div style="top:531px;font-size:11px;line-height:11px;color:#000;transform:scaleY(1.125);transform-origin:0 9px;left:211px;width:155px;overflow:hidden;letter-spacing:-0.1px;">ФСБЦ-2022, 01.7.11.07-0227,</div>
<div style="top:544px;font-size:11px;line-height:11px;color:#000;transform:scaleY(1.125);transform-origin:0 9px;left:211px;width:155px;overflow:hidden;letter-spacing:-0.1px;">приказ Минстроя России от</div>
<div style="top:557px;font-size:11px;line-height:11px;color:#000;transform:scaleY(1.125);transform-origin:0 9px;left:211px;width:155px;overflow:hidden;letter-spacing:-0.1px;">18.05.2022 г.</div>
<div style="top:531px;font-size:11px;line-height:11px;color:#000;transform:scaleY(1.125);transform-origin:0 9px;left:718px;width:75px;text-align:right;">0,28</div>
<div style="top:531px;font-size:11px;line-height:11px;color:#000;transform:scaleY(1.125);transform-origin:0 9px;left:797px;width:72px;text-align:right;">43,58</div>
<div style="top:557px;font-size:11px;line-height:11px;color:#000;transform:scaleY(1.125);transform-origin:0 9px;left:880px;width:66px;text-align:center;">0,04%</div>
<div style="left:33px;top:598px;width:908px;height:42px;background:#ffffff"></div>
<div style="left:648px;top:598px;width:223px;height:42px;background:#d8d8d8"></div>
<div style="left:648px;top:598px;width:223px;height:42px;background:#d8d8d8"></div>
<div style="left:872px;top:598px;width:69px;height:42px;background:#fff"></div>
<div style="left:5px;top:640px;width:11px;height:1px;background:#a0a0a0"></div>
<div style="left:33px;top:640px;width:908px;height:1px;background:#a0a0a0"></div>
<div style="left:66px;top:598px;width:1px;height:42px;background:#a0a0a0"></div>
<div style="left:96px;top:598px;width:1px;height:42px;background:#a0a0a0"></div>
<div style="left:184px;top:598px;width:1px;height:42px;background:#a0a0a0"></div>
<div style="left:207px;top:598px;width:1px;height:42px;background:#a0a0a0"></div>
<div style="left:367px;top:598px;width:1px;height:42px;background:#a0a0a0"></div>
<div style="left:517px;top:598px;width:1px;height:42px;background:#a0a0a0"></div>
<div style="left:577px;top:598px;width:1px;height:42px;background:#a0a0a0"></div>
<div style="left:647px;top:598px;width:1px;height:42px;background:#a0a0a0"></div>
<div style="left:715px;top:598px;width:1px;height:42px;background:#a0a0a0"></div>
<div style="left:795px;top:598px;width:1px;height:42px;background:#a0a0a0"></div>
<div style="left:871px;top:598px;width:1px;height:42px;background:#a0a0a0"></div>
<div style="top:602px;font-size:11px;line-height:11px;color:#000;transform:scaleY(1.125);transform-origin:0 9px;left:100px;width:83px;overflow:hidden;letter-spacing:-0.15px;">01.7.15.03-0013</div>
<div style="top:602px;font-size:11px;line-height:11px;color:#000;transform:scaleY(1.125);transform-origin:0 9px;left:211px;width:155px;overflow:hidden;letter-spacing:-0.1px;">ФСБЦ-2022 для 01.7.15.03-0013,</div>
<div style="top:615px;font-size:11px;line-height:11px;color:#000;transform:scaleY(1.125);transform-origin:0 9px;left:211px;width:155px;overflow:hidden;letter-spacing:-0.1px;">01.7.15.03-0013, приказ</div>
<div style="top:602px;font-size:11px;line-height:11px;color:#000;transform:scaleY(1.125);transform-origin:0 9px;left:718px;width:75px;text-align:right;">0,0119</div>
<div style="top:602px;font-size:11px;line-height:11px;color:#000;transform:scaleY(1.125);transform-origin:0 9px;left:797px;width:72px;text-align:right;">1 611,98</div>
</div>
<svg style="left:8px;top:338px" width="6" height="11"><path d="M0 0.5L5.2 5.2L0 10Z" fill="#000"/></svg>
<div style="left:5px;top:623px;width:936px;height:1px;background:#a0a0a0"></div>
<div style="left:941px;top:60px;width:17px;height:563px;background:#f0f0f0"></div>
<div style="left:941px;top:278px;width:17px;height:328px;background:repeating-conic-gradient(#e9e9e9 0 25%,#fcfcfc 0 50%) 0 0/2px 2px"></div>
<div style="left:941px;top:77px;width:17px;height:202px;background:#eeeeee;border:1px solid #a0a0a0;box-sizing:border-box"></div>
<svg style="left:945px;top:65px" width="10" height="8"><path d="M1 6.5L5 2.5L9 6.5" fill="none" stroke="#606060" stroke-width="2"/></svg>
<svg style="left:945px;top:611px" width="10" height="8"><path d="M1 1.5L5 5.5L9 1.5" fill="none" stroke="#606060" stroke-width="2.2"/></svg>
<div style="left:5px;top:623px;width:936px;height:17px;background:#f0f0f0"></div>
<div style="left:770px;top:624px;width:154px;height:15px;background:repeating-conic-gradient(#e9e9e9 0 25%,#fcfcfc 0 50%) 0 0/2px 2px"></div>
<div style="left:5px;top:623px;width:17px;height:17px;background:#f0f0f0;border:1px solid #a0a0a0;box-sizing:border-box"></div>
<div style="left:21px;top:623px;width:750px;height:17px;background:#eeeeee;border:1px solid #a0a0a0;border-left-width:2px;border-bottom-width:2px;box-sizing:border-box"></div>
<div style="left:924px;top:623px;width:17px;height:17px;background:#f0f0f0;border:1px solid #a0a0a0;box-sizing:border-box"></div>
<svg style="left:10px;top:627px" width="6" height="9"><path d="M5 0.5V8.5L1 4.5Z" fill="#000"/></svg>
<svg style="left:930px;top:627px" width="6" height="9"><path d="M1 0.5V8.5L5 4.5Z" fill="#000"/></svg>
<div style="left:5px;top:640px;width:51px;height:20px;background:repeating-conic-gradient(#ebebeb 0 25%,#fbfbfb 0 50%) 0 0/2px 2px"></div>
<div style="left:5px;top:640px;width:1px;height:20px;background:#a0a0a0"></div>
<div style="top:648px;font-size:11px;line-height:11px;color:#000;transform:scaleY(1.125);transform-origin:0 9px;left:9px;">Базовый</div>
<div style="top:648px;font-size:11px;line-height:11px;color:#000;transform:scaleY(1.125);transform-origin:0 9px;left:60px;">Текущий</div>
<div style="left:93px;top:671px;width:868px;height:2px;background:#707070"></div>
<div style="left:93px;top:671px;width:86px;height:19px;border-left:1px solid #707070;border-right:2px solid #707070;border-bottom:2px solid #707070;border-top:2px solid #707070;box-sizing:border-box;border-bottom-right-radius:2px;box-shadow:inset 1px 0 0 #fff"></div>
<div style="left:3px;top:689px;width:90px;height:2px;background:#707070"></div>
<div style="left:92px;top:682px;width:1px;height:9px;background:#707070"></div>
<div style="top:678px;font-size:11px;line-height:11px;color:#000;transform:scaleY(1.125);transform-origin:0 9px;left:10px;">Табличный вид</div>
<div style="top:676px;font-size:11px;line-height:11px;color:#000;transform:scaleY(1.125);transform-origin:0 9px;left:99px;">Предпросмотр</div>
<div style="left:1px;top:695px;width:960px;height:1px;background:#a0a0a0"></div>
<div style="left:1px;top:696px;width:960px;height:1px;background:#ffffff"></div>
<svg style="left:11px;top:706px" width="16" height="16" viewBox="0 0 16 16"><path d="M1.5 4.5L4.5 1.5H13.5V15.5H1.5Z" fill="#e4f4fc" stroke="#8aa0ae"/><path d="M1.5 4.5H4.5V1.5Z" fill="#fff" stroke="#8aa0ae"/><path d="M3 7.5H10M3 9.5H9M3 11.5H8" stroke="#b4d2e8"/><path d="M11.5 2V15" stroke="#f4b8b8"/><path d="M3.8 13.2L12.6 4.4" stroke="#d8a000" stroke-width="2.3"/><path d="M4 13L12.6 4.4" stroke="#ffe400" stroke-width="1.2"/><path d="M12.4 3.6L13.8 2.2" stroke="#f00000" stroke-width="2.2"/><path d="M2.6 14.4L4 13" stroke="#222" stroke-width="1.5"/></svg>
<div style="top:710px;font-size:11px;line-height:11px;color:#000;transform:scaleY(1.125);transform-origin:0 9px;left:39px;">Ресурс изменен</div>
<div style="left:155px;top:708px;width:1px;height:19px;background:#a0a0a0"></div>
<div style="left:156px;top:708px;width:1px;height:19px;background:#ffffff"></div>
<svg style="left:164px;top:708px" width="14" height="14"><path d="M2 2L12 12M12 2L2 12" stroke="#f0502a" stroke-width="1.8"/></svg>
<div style="top:710px;font-size:11px;line-height:11px;color:#000;transform:scaleY(1.125);transform-origin:0 9px;left:191px;">Ресурс удален</div>
<div style="left:295px;top:708px;width:1px;height:19px;background:#a0a0a0"></div>
<div style="left:296px;top:708px;width:1px;height:19px;background:#ffffff"></div>
<svg style="left:305px;top:707px" width="16" height="16" viewBox="0 0 16 16"><path d="M2.5 1.5H10.5L13.5 4.5V14.5H2.5Z" fill="#f4f8fc" stroke="#7888a8" stroke-width="1.1"/><path d="M10.5 1.5V4.5H13.5" fill="#dde4f0" stroke="#7888a8"/><path d="M8 3.8H12" stroke="#b0bcd4"/><rect x="8.5" y="6.5" width="3.5" height="6" fill="#b4c0d8"/><path d="M1 6.7H5V4.8L8.8 8.6L5 12.4V10.5H1Z" fill="#48d048" stroke="#089008" stroke-width="0.9"/></svg>
<div style="top:710px;font-size:11px;line-height:11px;color:#000;transform:scaleY(1.125);transform-origin:0 9px;left:335px;">Ресурс заменен</div>
<div style="left:772px;top:702px;width:88px;height:28px;background:#f0f0f0;border-top:1px solid #fff;border-left:1px solid #fff;border-right:1px solid #696969;border-bottom:1px solid #696969;box-sizing:border-box;box-shadow:inset -1px -1px 0 #a0a0a0"></div>
<div style="top:711px;font-size:11px;line-height:11px;color:#000;transform:scaleY(1.125);transform-origin:0 9px;left:772px;width:88px;text-align:center;">Применить</div>
<div style="left:866px;top:702px;width:88px;height:28px;background:#f0f0f0;border-top:1px solid #fff;border-left:1px solid #fff;border-right:1px solid #696969;border-bottom:1px solid #696969;box-sizing:border-box;box-shadow:inset -1px -1px 0 #a0a0a0"></div>
<div style="top:711px;font-size:11px;line-height:11px;color:#000;transform:scaleY(1.125);transform-origin:0 9px;left:866px;width:88px;text-align:center;">Закрыть</div>
<div style="left:276px;top:150px;width:382px;height:477px;background:#f0f0f0;border:1px solid #a0a0a0;box-sizing:border-box"></div>
<svg style="left:280px;top:155px" width="16" height="16" viewBox="0 0 16 16"><path d="M2 14L6.5 9.5" stroke="#d86a18" stroke-width="2.8" stroke-linecap="round"/><circle cx="10" cy="6.2" r="4.4" fill="#b8ccf0" stroke="#e88a40" stroke-width="1.5"/><circle cx="9.2" cy="5.2" r="1.9" fill="#eef4ff"/></svg>
<div style="top:158px;font-size:12px;line-height:12px;color:#000;left:301px;">Поиск ресурса по обоснованию</div>
<div style="top:158px;font-size:12px;line-height:12px;color:#000;left:524px;width:120px;text-align:right;">Ctrl+Enter</div>
<svg style="left:279px;top:176px" width="18" height="17" viewBox="0 0 18 17"><rect x="0.5" y="0.5" width="9" height="2.5" fill="#58a8f0" stroke="#303030" stroke-width="0.8"/><path d="M4.5 3V14.5H7" stroke="#303030" fill="none"/><rect x="7.5" y="5" width="9" height="2.5" fill="#58a8f0" stroke="#303030" stroke-width="0.8"/><rect x="7.5" y="9" width="9" height="2.5" fill="#58a8f0" stroke="#303030" stroke-width="0.8"/><rect x="7.5" y="13" width="9" height="2.5" fill="#58a8f0" stroke="#303030" stroke-width="0.8"/><path d="M0.5 8.5H6M4 6L7 8.5L4 11" stroke="#1a7a7a" stroke-width="2" fill="none"/></svg>
<div style="top:179px;font-size:12px;line-height:12px;color:#000;left:301px;">Выбор ресурса по классификатору</div>
<div style="top:179px;font-size:12px;line-height:12px;color:#000;left:524px;width:120px;text-align:right;">Alt+Enter</div>
<div style="left:280px;top:199px;width:374px;height:1px;background:#bcbcbc"></div>
<svg style="left:282px;top:208px" width="12" height="12"><path d="M1 1L11 11M11 1L1 11" stroke="#f0502a" stroke-width="1.7"/></svg>
<div style="top:208px;font-size:12px;line-height:12px;color:#000;left:301px;">Удалить ресурс</div>
<div style="top:208px;font-size:12px;line-height:12px;color:#000;left:524px;width:120px;text-align:right;">Ctrl+Del</div>
<div style="left:280px;top:228px;width:374px;height:1px;background:#bcbcbc"></div>
<div style="top:237px;font-size:12px;line-height:12px;color:#000;left:301px;">Материал заказчика</div>
<div style="top:237px;font-size:12px;line-height:12px;color:#000;left:524px;width:120px;text-align:right;">Ctrl+M</div>
<div style="top:258px;font-size:12px;line-height:12px;color:#000;left:301px;">Оборудование</div>
<div style="top:258px;font-size:12px;line-height:12px;color:#000;left:524px;width:120px;text-align:right;">Ctrl+K</div>
<div style="left:280px;top:278px;width:374px;height:1px;background:#bcbcbc"></div>
<svg style="left:280px;top:284px" width="16" height="16" viewBox="0 0 16 16"><path d="M2 14L6.5 9.5" stroke="#d86a18" stroke-width="2.8" stroke-linecap="round"/><circle cx="10" cy="6.2" r="4.4" fill="#b8ccf0" stroke="#e88a40" stroke-width="1.5"/><circle cx="9.2" cy="5.2" r="1.9" fill="#eef4ff"/></svg>
<div style="top:287px;font-size:12px;line-height:12px;color:#000;left:301px;">Поиск</div>
<div style="top:287px;font-size:12px;line-height:12px;color:#000;left:524px;width:120px;text-align:right;">Ctrl+F</div>
<svg style="left:644px;top:289px" width="5" height="9"><path d="M0 0V8L4 4Z" fill="#000"/></svg>
<div style="left:280px;top:307px;width:374px;height:1px;background:#bcbcbc"></div>
<div style="top:315px;font-size:12px;line-height:12px;color:#000;left:301px;">Выделить группу ресурсов</div>
<svg style="left:644px;top:317px" width="5" height="9"><path d="M0 0V8L4 4Z" fill="#000"/></svg>
<div style="left:280px;top:336px;width:374px;height:1px;background:#bcbcbc"></div>
<div style="top:345px;font-size:12px;line-height:12px;color:#000;left:301px;">Изменить цену на выделенную часть</div>
<svg style="left:644px;top:347px" width="5" height="9"><path d="M0 0V8L4 4Z" fill="#000"/></svg>
<svg style="left:283px;top:365px" width="10" height="14"><path d="M5 0.5V6.5M2 3.5H8" stroke="#3c8a14" stroke-width="2.6"/><path d="M1.5 10.5H8.5" stroke="#e8502a" stroke-width="2"/></svg>
<div style="top:366px;font-size:12px;line-height:12px;color:#000;left:301px;">Поправка к норме расхода...</div>
<svg style="left:281px;top:385px" width="13" height="15" viewBox="0 0 13 15"><path d="M0.5 2.5L2.5 0.5H12.5V14.5H0.5Z" fill="#8cc4f4" stroke="#7f8fa0"/><path d="M8 2L3.5 8H7L4.5 13" fill="none" stroke="#f4b400" stroke-width="1.5"/></svg>
<div style="top:387px;font-size:12px;line-height:12px;color:#000;left:301px;">Рассчитать оплату труда...</div>
<div style="top:408px;font-size:12px;line-height:12px;color:#000;left:301px;">Сформировать сборник материалов...</div>
<div style="left:280px;top:428px;width:374px;height:1px;background:#bcbcbc"></div>
<svg style="left:279px;top:434px" width="17" height="14" viewBox="0 0 17 14"><rect x="4.5" y="0.5" width="8" height="5" fill="#eaf2fa" stroke="#9aaabb"/><rect x="0.5" y="4.5" width="16" height="6" rx="1.5" fill="#505860" stroke="#404448"/><rect x="3.5" y="9.5" width="10" height="4" fill="#fff" stroke="#9aaabb"/><rect x="13" y="7" width="1.5" height="1.5" fill="#60e060"/></svg>
<div style="top:436px;font-size:12px;line-height:12px;color:#000;left:301px;">Напечатать документ</div>
<svg style="left:644px;top:438px" width="5" height="9"><path d="M0 0V8L4 4Z" fill="#000"/></svg>
<div style="left:280px;top:457px;width:374px;height:1px;background:#bcbcbc"></div>
<div style="top:466px;font-size:12px;line-height:12px;color:#8e8e8e;left:301px;">Показать навигацию по ресурсам</div>
<div style="top:466px;font-size:12px;line-height:12px;color:#8e8e8e;left:524px;width:120px;text-align:right;">Ctrl+N</div>
<div style="top:487px;font-size:12px;line-height:12px;color:#8e8e8e;left:301px;">Скрыть навигацию по ресурсам</div>
<div style="top:487px;font-size:12px;line-height:12px;color:#8e8e8e;left:524px;width:120px;text-align:right;">Ctrl+H</div>
<div style="left:280px;top:507px;width:374px;height:1px;background:#bcbcbc"></div>
<div style="top:516px;font-size:12px;line-height:12px;color:#000;left:301px;">Показать панель итогов</div>
<div style="left:275px;top:532px;width:381px;height:23px;background:#ff0000"></div>
<div style="left:279px;top:535px;width:373px;height:16px;background:#0078d7"></div>
<div style="top:537px;font-size:12px;line-height:12px;color:#fff;left:301px;">Показать расценки, использующие ресурс</div>
<div style="top:558px;font-size:12px;line-height:12px;color:#000;left:301px;">Показать окно выбора цены из мониторинга</div>
<div style="top:558px;font-size:12px;line-height:12px;color:#000;left:524px;width:120px;text-align:right;">Ctrl+P</div>
<div style="left:280px;top:578px;width:374px;height:1px;background:#bcbcbc"></div>
<div style="top:588px;font-size:12px;line-height:12px;color:#000;left:301px;">Подсветить строки без назначенных индексов</div>
<div style="top:588px;font-size:12px;line-height:12px;color:#000;left:524px;width:120px;text-align:right;">Shift+Ctrl+I</div>
<div style="top:607px;font-size:12px;line-height:12px;color:#000;left:301px;">Подсветить строки без назначенных видов цен</div>
<div style="top:607px;font-size:12px;line-height:12px;color:#000;left:524px;width:120px;text-align:right;">Shift+Ctrl+T</div>
<svg style="left:0;top:0" width="962" height="737"><path d="M217 366L268 522" stroke="#ff0000" stroke-width="3"/><path d="M259 522L274.5 517.5L275 550Z" fill="#ff0000"/></svg>
</body></html>
